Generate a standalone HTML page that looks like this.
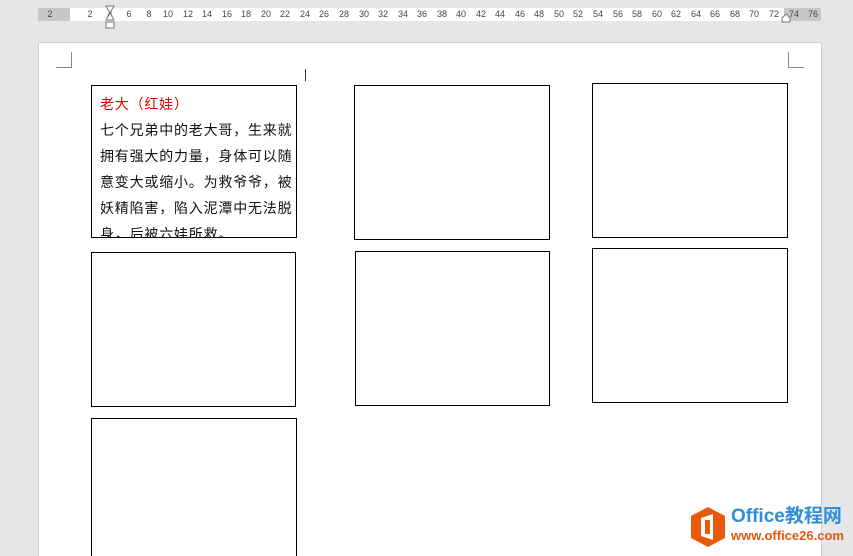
<!DOCTYPE html>
<html><head><meta charset="utf-8"><style>
html,body{margin:0;width:853px;height:556px;overflow:hidden}
body{background:#e6e6e6;position:relative;font-family:"Liberation Sans","Noto Sans CJK SC",sans-serif}
.ruler{position:absolute;top:8px;left:38px;width:783px;height:13px;background:#fff}
.rg{position:absolute;top:8px;height:13px;background:#c8c8c8}
.n{position:absolute;top:9px;font-size:9px;color:#444;width:20px;text-align:center;margin-left:-10px;font-family:"Liberation Sans",sans-serif}
.page{position:absolute;left:38px;top:42px;width:782px;height:514px;background:#fff;border:1px solid #d0d0d0;border-bottom:0}
.b{position:absolute;border:1px solid #000;background:#fff;box-sizing:border-box;overflow:hidden}
.t{font-size:14px;letter-spacing:0.8px;line-height:26px;color:#111;padding:5px 0 0 8px;height:100%;overflow:hidden;box-sizing:border-box;white-space:nowrap}
.c{position:absolute;border-color:#888;border-style:solid;width:15px;height:15px}
</style></head><body>
<div class="ruler"></div>
<div class="rg" style="left:38px;width:32px"></div>
<div class="rg" style="left:784px;width:37px"></div>
<div class="n" style="left:50px">2</div>
<div class="n" style="left:90px">2</div><div class="n" style="left:110px">4</div><div class="n" style="left:129px">6</div><div class="n" style="left:149px">8</div><div class="n" style="left:168px">10</div><div class="n" style="left:188px">12</div><div class="n" style="left:207px">14</div><div class="n" style="left:227px">16</div><div class="n" style="left:246px">18</div><div class="n" style="left:266px">20</div><div class="n" style="left:285px">22</div><div class="n" style="left:305px">24</div><div class="n" style="left:324px">26</div><div class="n" style="left:344px">28</div><div class="n" style="left:364px">30</div><div class="n" style="left:383px">32</div><div class="n" style="left:403px">34</div><div class="n" style="left:422px">36</div><div class="n" style="left:442px">38</div><div class="n" style="left:461px">40</div><div class="n" style="left:481px">42</div><div class="n" style="left:500px">44</div><div class="n" style="left:520px">46</div><div class="n" style="left:539px">48</div><div class="n" style="left:559px">50</div><div class="n" style="left:578px">52</div><div class="n" style="left:598px">54</div><div class="n" style="left:618px">56</div><div class="n" style="left:637px">58</div><div class="n" style="left:657px">60</div><div class="n" style="left:676px">62</div><div class="n" style="left:696px">64</div><div class="n" style="left:715px">66</div><div class="n" style="left:735px">68</div><div class="n" style="left:754px">70</div><div class="n" style="left:774px">72</div><div class="n" style="left:794px">74</div><div class="n" style="left:813px">76</div>
<svg style="position:absolute;left:104px;top:5px" width="12" height="25"><path d="M2 1H10L6 8L10 15H2L6 8Z" fill="#fff" stroke="#777"/><rect x="2" y="17" width="8" height="6" fill="#fff" stroke="#777"/></svg>
<svg style="position:absolute;left:780px;top:13px" width="12" height="10"><path d="M2 9V5L6 1L10 5V9Z" fill="#fff" stroke="#777"/></svg>
<div class="page"></div>
<div class="c" style="left:56px;top:52px;border-width:0 1px 1px 0"></div>
<div class="c" style="left:788px;top:52px;border-width:0 0 1px 1px"></div>
<div style="position:absolute;left:305px;top:69px;width:1px;height:12px;background:#333"></div>
<div class="b" style="left:91px;top:85px;width:206px;height:153px"><div class="t"><span style="color:#d00">老大（红娃）</span><br>七个兄弟中的老大哥，生来就<br>拥有强大的力量，身体可以随<br>意变大或缩小。为救爷爷，被<br>妖精陷害，陷入泥潭中无法脱<br>身，后被六娃所救。</div></div>
<div class="b" style="left:354px;top:85px;width:196px;height:155px"></div>
<div class="b" style="left:592px;top:83px;width:196px;height:155px"></div>
<div class="b" style="left:91px;top:252px;width:205px;height:155px"></div>
<div class="b" style="left:355px;top:251px;width:195px;height:155px"></div>
<div class="b" style="left:592px;top:248px;width:196px;height:155px"></div>
<div class="b" style="left:91px;top:418px;width:206px;height:138px;border-bottom:0"></div>
<svg style="position:absolute;left:689px;top:506px" width="38" height="42"><path d="M19 1L36 10V32L19 41L2 32V10Z" fill="#e8590c"/><path d="M12 12L24 8V34L12 30Z" fill="#fff"/><rect x="16" y="14" width="5" height="14" fill="#e8590c"/></svg>
<div style="position:absolute;left:731px;top:506px;font-size:19px;font-weight:bold;color:#2e8fd8;line-height:22px">Office教程网</div>
<div style="position:absolute;left:731px;top:528px;font-size:13px;font-weight:bold;color:#e8590c;line-height:16px">www.office26.com</div>
</body></html>
